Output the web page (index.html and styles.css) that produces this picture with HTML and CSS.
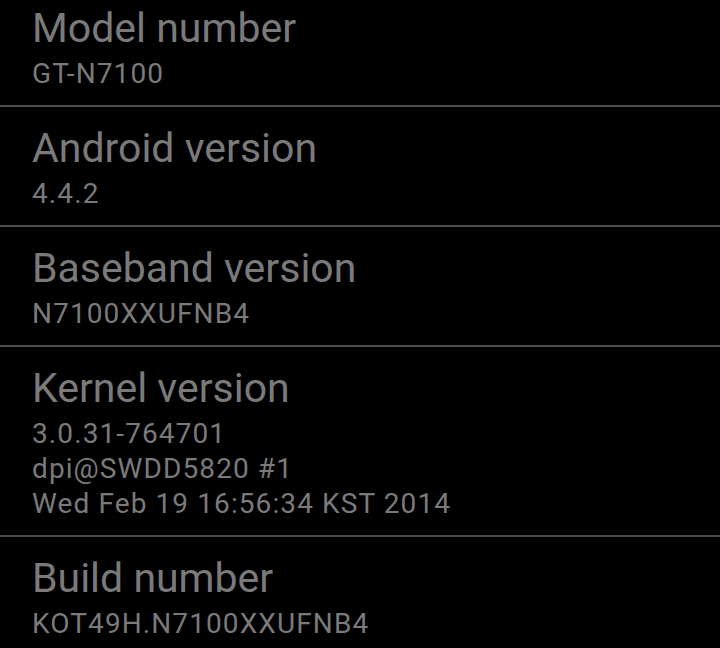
FILE: index.html
```html
<!DOCTYPE html>
<html lang="en">
<head>
    <meta charset="UTF-8">
    <meta name="viewport" content="width=device-width, initial-scale=1.0">
    <title>About device</title>
    <link rel="stylesheet" href="styles.css">
</head>
<body>

    <div class="list">
        <div class="item">
            <div class="title">Model number</div>
            <div class="summary">GT-N7100</div>
        </div>
        <div class="item">
            <div class="title">Android version</div>
            <div class="summary">4.4.2</div>
        </div>
        <div class="item">
            <div class="title">Baseband version</div>
            <div class="summary">N7100XXUFNB4</div>
        </div>
        <div class="item">
            <div class="title">Kernel version</div>
            <div class="summary">3.0.31-764701<br>dpi@SWDD5820 #1<br>Wed Feb 19 16:56:34 KST 2014</div>
        </div>
        <div class="item">
            <div class="title">Build number</div>
            <div class="summary">KOT49H.N7100XXUFNB4</div>
        </div>
    </div>

</body>
</html>
```

FILE: styles.css
```css
body {
    margin: 0;
    background: #000;
    font-family: Roboto, "Noto Sans", sans-serif;
    color: #7a7a7a;
    overflow: hidden;
}

/* list is scrolled a little, first row is cut at the top */
.list {
    margin-top: -13px;
}

.item {
    padding: 13px 16px 14px 32px;
    border-bottom: 2px solid #4a4a4a;
}

.title {
    font-size: 41px;
    line-height: 56px;
}

.summary {
    font-size: 28px;
    line-height: 35px;
    letter-spacing: 1.1px;
}
```
